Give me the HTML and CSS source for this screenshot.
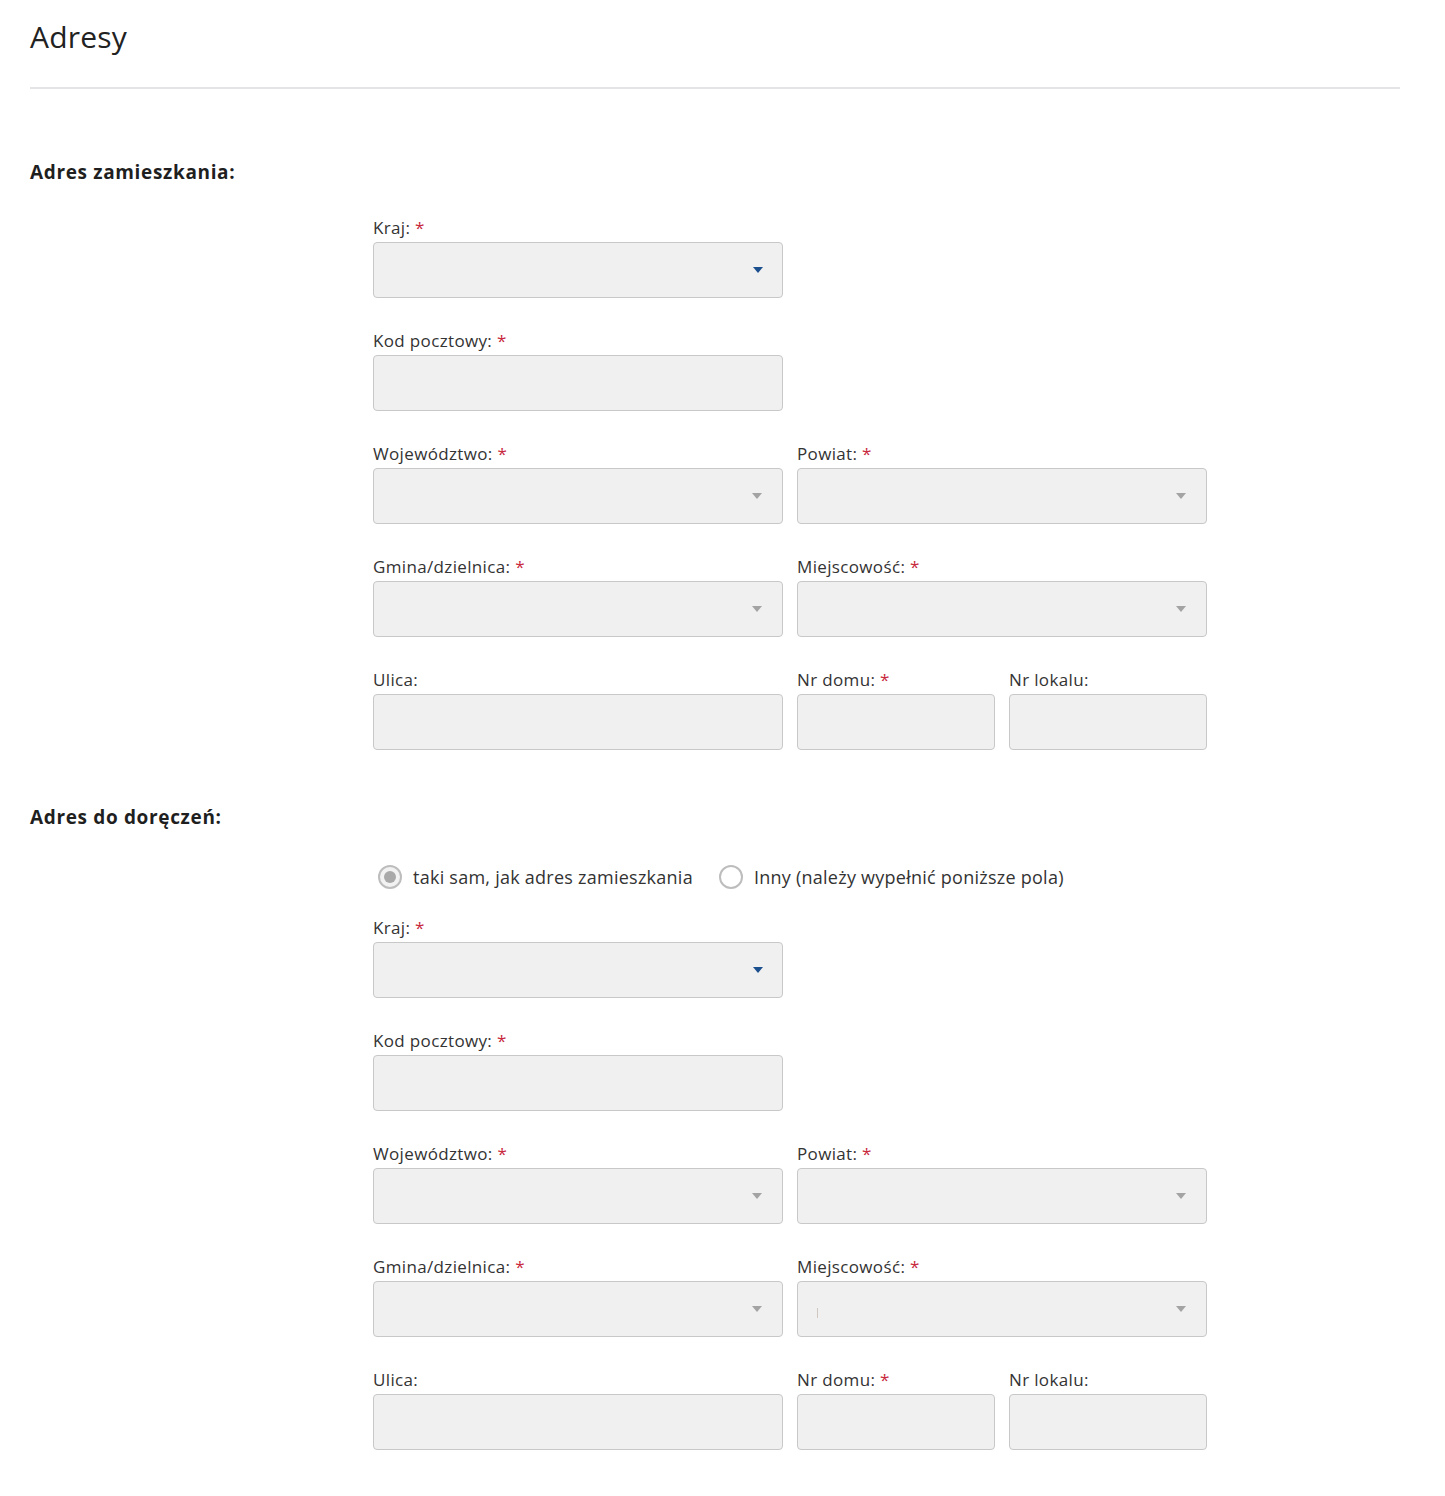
FILE: index.html
```html
<!DOCTYPE html>
<html lang="pl">
<head>
<meta charset="utf-8">
<title>Adresy</title>
<link rel="stylesheet" href="styles.css">
</head>
<body>
<main class="page">
  <h1 class="title">Adresy</h1>
  <hr class="divider">

  <h2 class="section">Adres zamieszkania:</h2>
  <div class="form">
    <div class="row">
      <div class="field w1">
        <div class="label">Kraj: <span class="req">*</span></div>
        <div class="input select"><span class="arrow blue"></span></div>
      </div>
    </div>
    <div class="row">
      <div class="field w1">
        <div class="label">Kod pocztowy: <span class="req">*</span></div>
        <div class="input"></div>
      </div>
    </div>
    <div class="row">
      <div class="field w1">
        <div class="label">Województwo: <span class="req">*</span></div>
        <div class="input select"><span class="arrow"></span></div>
      </div>
      <div class="field w1">
        <div class="label">Powiat: <span class="req">*</span></div>
        <div class="input select"><span class="arrow"></span></div>
      </div>
    </div>
    <div class="row">
      <div class="field w1">
        <div class="label">Gmina/dzielnica: <span class="req">*</span></div>
        <div class="input select"><span class="arrow"></span></div>
      </div>
      <div class="field w1">
        <div class="label">Miejscowość: <span class="req">*</span></div>
        <div class="input select"><span class="arrow"></span></div>
      </div>
    </div>
    <div class="row">
      <div class="field w1">
        <div class="label">Ulica:</div>
        <div class="input"></div>
      </div>
      <div class="field w2">
        <div class="label">Nr domu: <span class="req">*</span></div>
        <div class="input"></div>
      </div>
      <div class="field w2">
        <div class="label">Nr lokalu:</div>
        <div class="input"></div>
      </div>
    </div>
  </div>

  <h2 class="section second">Adres do doręczeń:</h2>
  <div class="form">
    <div class="radios">
      <label class="radio"><span class="circle checked"></span>taki sam, jak adres zamieszkania</label>
      <label class="radio"><span class="circle"></span>Inny (należy wypełnić poniższe pola)</label>
    </div>
    <div class="row">
      <div class="field w1">
        <div class="label">Kraj: <span class="req">*</span></div>
        <div class="input select"><span class="arrow blue"></span></div>
      </div>
    </div>
    <div class="row">
      <div class="field w1">
        <div class="label">Kod pocztowy: <span class="req">*</span></div>
        <div class="input"></div>
      </div>
    </div>
    <div class="row">
      <div class="field w1">
        <div class="label">Województwo: <span class="req">*</span></div>
        <div class="input select"><span class="arrow"></span></div>
      </div>
      <div class="field w1">
        <div class="label">Powiat: <span class="req">*</span></div>
        <div class="input select"><span class="arrow"></span></div>
      </div>
    </div>
    <div class="row">
      <div class="field w1">
        <div class="label">Gmina/dzielnica: <span class="req">*</span></div>
        <div class="input select"><span class="arrow"></span></div>
      </div>
      <div class="field w1">
        <div class="label">Miejscowość: <span class="req">*</span></div>
        <div class="input select"><span class="caret"></span><span class="arrow"></span></div>
      </div>
    </div>
    <div class="row last">
      <div class="field w1">
        <div class="label">Ulica:</div>
        <div class="input"></div>
      </div>
      <div class="field w2">
        <div class="label">Nr domu: <span class="req">*</span></div>
        <div class="input"></div>
      </div>
      <div class="field w2">
        <div class="label">Nr lokalu:</div>
        <div class="input"></div>
      </div>
    </div>
  </div>
</main>
</body>
</html>
```

FILE: styles.css
```css
* { box-sizing: border-box; }

html, body {
  margin: 0;
  padding: 0;
  background: #ffffff;
}

body {
  font-family: "Open Sans", "Noto Sans", "Liberation Sans", sans-serif;
  color: #333333;
}

.page {
  width: 1400px;
  padding: 17px 0 40px 30px;
}

.title {
  margin: 0;
  font-size: 30px;
  line-height: 40px;
  font-weight: 400;
  color: #222222;
  letter-spacing: 0.2px;
}

.divider {
  margin: 30px 0 0 0;
  border: 0;
  height: 2px;
  background: #e4e4e6;
}

.section {
  margin: 71px 0 0 0;
  font-size: 19px;
  line-height: 24px;
  font-weight: 700;
  color: #1f1f1f;
  letter-spacing: 0.65px;
}

.section.second {
  margin-top: 23px;
}

.form {
  margin-left: 343px;
  padding-top: 33px;
  display: flex;
  flex-direction: column;
}

.row {
  display: flex;
  gap: 14px;
  margin-bottom: 32px;
}

.row.last {
  margin-bottom: 0;
}

.field {
  display: flex;
  flex-direction: column;
  gap: 3px;
}

.w1 { width: 410px; }
.w2 { width: 198px; }

.label {
  font-size: 17px;
  line-height: 22px;
  color: #333333;
  letter-spacing: 0.35px;
}

.req {
  color: #c8283c;
}

.input {
  position: relative;
  height: 56px;
  background: #f0f0f0;
  border: 1px solid #c8c8c8;
  border-radius: 4px;
}

.arrow {
  position: absolute;
  right: 20px;
  top: 24px;
  width: 0;
  height: 0;
  border-left: 5.5px solid transparent;
  border-right: 5.5px solid transparent;
  border-top: 6px solid #a3a3a3;
}

.arrow.blue {
  right: 19px;
  border-top-color: #1c4f8e;
}

.caret {
  position: absolute;
  left: 19px;
  top: 26px;
  width: 1px;
  height: 10px;
  background: #d0c8c0;
}

.radios {
  display: flex;
  align-items: center;
  gap: 26px;
  margin: 3px 0 28px 5px;
  height: 24px;
}

.radio {
  display: flex;
  align-items: center;
  gap: 11px;
  font-size: 18px;
  line-height: 24px;
  color: #333333;
  letter-spacing: 0.25px;
}

.circle {
  position: relative;
  width: 24px;
  height: 24px;
  border-radius: 50%;
  border: 2px solid #bdbdbd;
  background: #ffffff;
  flex: none;
}

.circle.checked {
  background: #f2f2f2;
}

.circle.checked::after {
  content: "";
  position: absolute;
  left: 4px;
  top: 4px;
  width: 12px;
  height: 12px;
  border-radius: 50%;
  background: #a9a9a9;
}
```
